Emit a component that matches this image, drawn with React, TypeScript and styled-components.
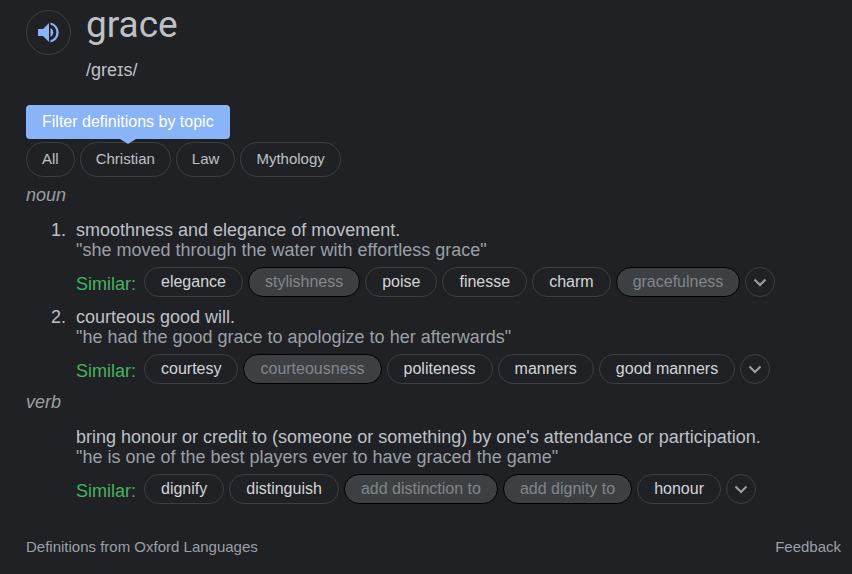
import React from 'react';
import styled, { createGlobalStyle, css } from 'styled-components';

const GlobalStyle = createGlobalStyle`
  * { box-sizing: border-box; }
  body {
    margin: 0;
    background: #202124;
    color: #bdc1c6;
    font-family: "Liberation Sans", Arial, sans-serif;
    font-size: 18px;
    line-height: 20px;
  }
  button { font-family: inherit; cursor: pointer; }
`;

const Page = styled.main`
  padding: 6px 11px 16px 26px;
`;

const Header = styled.header`
  display: flex;
  align-items: flex-start;
  gap: 15px;
`;

const AudioButton = styled.button`
  display: flex;
  align-items: center;
  justify-content: center;
  flex: none;
  width: 45px;
  height: 45px;
  margin-top: 4px;
  padding: 0;
  border: 1px solid #3c4043;
  border-radius: 50%;
  background: transparent;
  color: #8ab4f8;
`;

const Word = styled.h1`
  margin: 0;
  font-family: Roboto, sans-serif;
  font-size: 37px;
  font-weight: 400;
  line-height: 38px;
`;

const Phonetic = styled.p`
  margin: 16px 0 0;
`;

const Topics = styled.nav`
  position: relative;
  display: flex;
  flex-wrap: wrap;
  gap: 5px;
  margin-top: 62px;
`;

const Tooltip = styled.div`
  position: absolute;
  left: 0;
  bottom: calc(100% + 3px);
  padding: 7px 16px;
  border-radius: 4px;
  background: #8ab4f8;
  color: #fff;
  font-size: 16px;
  white-space: nowrap;

  &::after {
    content: "";
    position: absolute;
    top: 100%;
    left: 50%;
    margin-left: -8px;
    border: 8px solid transparent;
    border-top: 5px solid #8ab4f8;
    border-bottom: 0;
  }
`;

const TopicButton = styled.button`
  height: 35px;
  padding: 0 15px 2px;
  border: 1px solid #3c4043;
  border-radius: 18px;
  background: transparent;
  color: #bdc1c6;
  font-size: 15px;
`;

const PartOfSpeech = styled.h2`
  margin: 0;
  color: #9aa0a6;
  font-size: 18px;
  font-style: italic;
  font-weight: 400;
  line-height: 20px;
`;

const Entry = styled.section`
  margin-top: 8px;
`;

const Senses = styled.ol`
  margin: 15px 0 0;
  padding: 0 0 0 50px;
  list-style: none;
  counter-reset: sense;
  display: grid;
  gap: 10px;
`;

const Sense = styled.li<{ $numbered: boolean }>`
  display: flex;
  flex-direction: column;
  position: relative;
  ${({ $numbered }) => $numbered && css`
    counter-increment: sense;
    &::before {
      content: counter(sense) ".";
      position: absolute;
      right: calc(100% + 10px);
    }
  `}
`;

const Definition = styled.p`
  margin: 0;
`;

const Example = styled.p`
  margin: 0;
  color: #9aa0a6;
`;

const Similar = styled.div`
  display: flex;
  flex-wrap: wrap;
  align-items: center;
  gap: 5px;
  margin-top: 7px;
`;

const SimilarLabel = styled.span`
  margin-right: 3px;
  padding-top: 3px;
  color: #44b35f;
`;

const Chip = styled.button`
  height: 30px;
  padding: 0 16px 1px;
  border: 1px solid #3c4043;
  border-radius: 15px;
  background: transparent;
  color: #d2d5d9;
  font-size: 16px;

  &:disabled {
    border-color: #000;
    background: #3c4043;
    color: #80868b;
    cursor: default;
  }
`;

const MoreButton = styled.button`
  display: flex;
  align-items: center;
  justify-content: center;
  width: 30px;
  height: 30px;
  padding: 0;
  border: 1px solid #3c4043;
  border-radius: 50%;
  background: transparent;
  color: #9aa0a6;
`;

const Footer = styled.footer`
  display: flex;
  justify-content: space-between;
  margin-top: 33px;
  font-size: 15px;
`;

const FooterLink = styled.a`
  color: #9aa0a6;
  text-decoration: none;
`;

type Term = { text: string; plain?: boolean };
type SenseData = { definition: string; example: string; similar: Term[] };
type EntryData = { part: string; senses: SenseData[] };

const topics = ['All', 'Christian', 'Law', 'Mythology'];

const entries: EntryData[] = [
  {
    part: 'noun',
    senses: [
      {
        definition: 'smoothness and elegance of movement.',
        example: '"she moved through the water with effortless grace"',
        similar: [
          { text: 'elegance' },
          { text: 'stylishness', plain: true },
          { text: 'poise' },
          { text: 'finesse' },
          { text: 'charm' },
          { text: 'gracefulness', plain: true },
        ],
      },
      {
        definition: 'courteous good will.',
        example: '"he had the good grace to apologize to her afterwards"',
        similar: [
          { text: 'courtesy' },
          { text: 'courteousness', plain: true },
          { text: 'politeness' },
          { text: 'manners' },
          { text: 'good manners' },
        ],
      },
    ],
  },
  {
    part: 'verb',
    senses: [
      {
        definition:
          "bring honour or credit to (someone or something) by one's attendance or participation.",
        example: '"he is one of the best players ever to have graced the game"',
        similar: [
          { text: 'dignify' },
          { text: 'distinguish' },
          { text: 'add distinction to', plain: true },
          { text: 'add dignity to', plain: true },
          { text: 'honour' },
        ],
      },
    ],
  },
];

const SpeakerIcon = () => (
  <svg width="22" height="22" viewBox="0 0 22 22" fill="currentColor" aria-hidden="true">
    <path d="M0 7v7h5l6 6V1L5 7z" />
    <path d="M12.500 6v9a5 5 0 0 0 0-9z" />
    <path d="M12.500 0.500v2.300a8 8 0 0 1 0 15.400v2.300a10.200 10.200 0 0 0 0-20z" />
  </svg>
);

const ChevronIcon = () => (
  <svg width="14" height="14" viewBox="0 0 14 14" fill="none" stroke="currentColor" strokeWidth="2" aria-hidden="true">
    <path d="M1.500 4.500 7 10l5.500-5.500" />
  </svg>
);

export default function App() {
  return (
    <>
      <GlobalStyle />
      <Page>
        <Header>
          <AudioButton aria-label="Listen">
            <SpeakerIcon />
          </AudioButton>
          <div>
            <Word>grace</Word>
            <Phonetic>/ɡreɪs/</Phonetic>
          </div>
        </Header>
        <Topics aria-label="Topics">
          <Tooltip role="tooltip">Filter definitions by topic</Tooltip>
          {topics.map((topic) => (
            <TopicButton key={topic}>{topic}</TopicButton>
          ))}
        </Topics>
        {entries.map((entry) => (
          <Entry key={entry.part}>
            <PartOfSpeech>{entry.part}</PartOfSpeech>
            <Senses>
              {entry.senses.map((sense) => (
                <Sense key={sense.definition} $numbered={entry.senses.length > 1}>
                  <Definition>{sense.definition}</Definition>
                  <Example>{sense.example}</Example>
                  <Similar>
                    <SimilarLabel>Similar:</SimilarLabel>
                    {sense.similar.map((term) => (
                      <Chip key={term.text} disabled={term.plain}>
                        {term.text}
                      </Chip>
                    ))}
                    <MoreButton aria-label="More similar words">
                      <ChevronIcon />
                    </MoreButton>
                  </Similar>
                </Sense>
              ))}
            </Senses>
          </Entry>
        ))}
        <Footer>
          <FooterLink href="#oxford">Definitions from Oxford Languages</FooterLink>
          <FooterLink href="#feedback">Feedback</FooterLink>
        </Footer>
      </Page>
    </>
  );
}
